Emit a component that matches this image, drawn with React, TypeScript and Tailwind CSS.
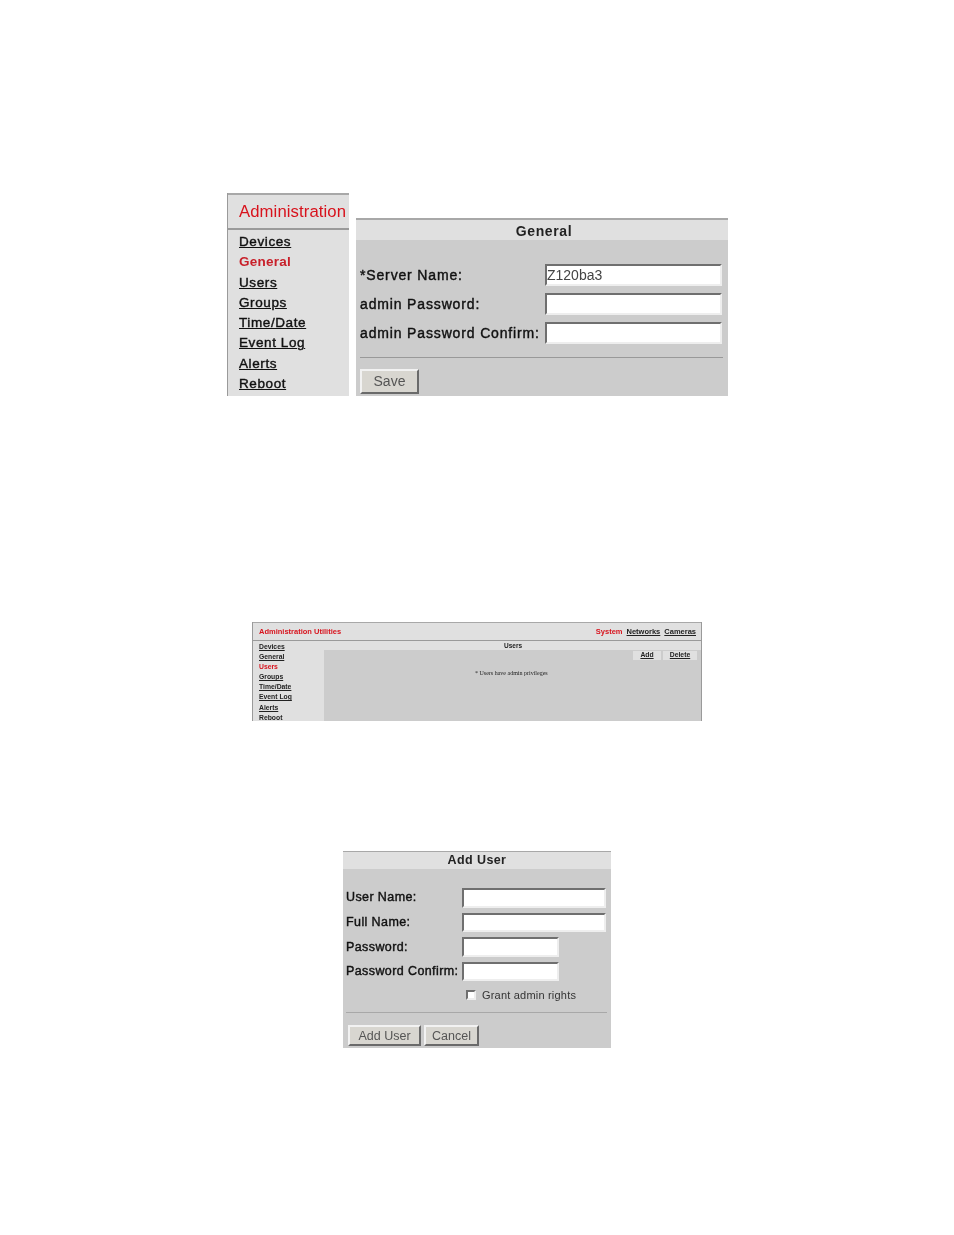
const NAV_ITEMS = [
  "Devices",
  "General",
  "Users",
  "Groups",
  "Time/Date",
  "Event Log",
  "Alerts",
  "Reboot",
];

const BEVEL_INPUT =
  "block h-full w-full border-2 border-t-[#6f6f6f] border-l-[#6f6f6f] border-r-[#eeeeee] border-b-[#eeeeee] bg-white";
const BEVEL_BUTTON =
  "flex items-center justify-center border-2 border-t-[#f2f2f2] border-l-[#f2f2f2] border-r-[#6a6a6a] border-b-[#6a6a6a] bg-[#d8d6d0] text-[#555555]";

function FieldInput({
  className,
  value,
}: {
  className: string;
  value?: string;
}) {
  return (
    <div className={className}>
      <div className={`${BEVEL_INPUT} flex items-center text-[14px] leading-none text-[#444444]`}>
        {value}
      </div>
    </div>
  );
}

function AdminNav() {
  return (
    <div className="flex h-[203px] w-[122px] flex-col border-l border-l-[#9a9a9a] bg-[#e0e0e0]">
      <div className="flex h-[37px] shrink-0 items-center border-y-2 border-t-[#a8a8a8] border-b-[#9a9a9a] pl-[11px] text-[16.7px] tracking-[0.1px] whitespace-nowrap text-[#d8121c]">
        Administration
      </div>
      <div className="flex flex-col pt-[2px] pl-[11px]">
        {NAV_ITEMS.map((item) => (
          <span
            key={item}
            className={`h-[20.3px] text-[13.5px] leading-[20px] ${
              item === "General"
                ? "font-bold tracking-[0.25px] text-[#c8202a]"
                : "tracking-[0.6px] text-[#111111] underline [-webkit-text-stroke:0.4px_currentColor]"
            }`}
          >
            {item}
          </span>
        ))}
      </div>
    </div>
  );
}

function GeneralPanel() {
  const rows = [
    { label: "*Server Name:", value: "Z120ba3" },
    { label: "admin Password:" },
    { label: "admin Password Confirm:" },
  ];
  return (
    <div className="mt-[25px] ml-[7px] flex h-[178px] w-[372px] flex-col bg-[#cccccc]">
      <div className="flex h-[22px] shrink-0 items-center justify-center border-t-2 border-t-[#a8a8a8] bg-[#e0e0e0] pt-[2px] text-[14px] font-bold tracking-[0.6px] text-[#222222]">
        <span className="ml-[4px]">General</span>
      </div>
      <div className="flex flex-col gap-[7px] pt-[24px] pl-[4px]">
        {rows.map((row) => (
          <div key={row.label} className="flex h-[22px] items-center">
            <span className="w-[185px] text-[14px] tracking-[0.85px] whitespace-nowrap text-[#111111] [-webkit-text-stroke:0.4px_currentColor]">
              {row.label}
            </span>
            <FieldInput className="h-[22px] w-[177px]" value={row.value} />
          </div>
        ))}
      </div>
      <div className="mt-[13px] ml-[4px] h-[1px] w-[363px] bg-[#999999]" />
      <div className={`${BEVEL_BUTTON} mt-[11px] ml-[4px] h-[25px] w-[59px] text-[14px]`}>
        Save
      </div>
    </div>
  );
}

function UtilitiesShot() {
  return (
    <div className="mt-[226px] ml-[252px] flex h-[99px] w-[450px] flex-col border-x border-x-[#9a9a9a] bg-[#cccccc] blur-[0.4px]">
      <div className="flex h-[19px] shrink-0 items-center justify-between border-y border-t-[#a8a8a8] border-b-[#9a9a9a] bg-[#e0e0e0] pr-[5px] pl-[6px] text-[7.5px] whitespace-nowrap">
        <span className="font-bold text-[#d8121c]">Administration Utilities</span>
        <div className="flex gap-[4px] font-bold">
          <span className="text-[#d8121c]">System</span>
          <span className="text-[#222222] underline">Networks</span>
          <span className="text-[#222222] underline">Cameras</span>
        </div>
      </div>
      <div className="flex min-h-0 flex-1">
        <div className="flex w-[71px] shrink-0 flex-col overflow-hidden bg-[#e0e0e0] pt-[1px] pl-[6px]">
          {NAV_ITEMS.map((item) => (
            <span
              key={item}
              className={`h-[10.1px] shrink-0 text-[6.8px] leading-[10px] font-bold ${
                item === "Users" ? "text-[#d8121c]" : "text-[#222222] underline"
              }`}
            >
              {item}
            </span>
          ))}
        </div>
        <div className="flex flex-1 flex-col">
          <div className="flex h-[9px] shrink-0 items-center justify-center bg-[#e0e0e0] text-[6.5px] font-bold text-[#222222]">
            <span className="ml-[1px]">Users</span>
          </div>
          <div className="mt-[1px] mr-[4px] flex justify-end gap-[2px]">
            <span className="flex h-[9px] w-[28px] items-center justify-center bg-[#e0e0e0] text-[6.8px] leading-none font-bold text-[#222222] underline">
              Add
            </span>
            <span className="flex h-[9px] w-[34px] items-center justify-center bg-[#e0e0e0] text-[6.8px] leading-none font-bold text-[#222222] underline">
              Delete
            </span>
          </div>
          <span className="mt-[9px] ml-[151px] font-['Liberation_Serif',serif] text-[6px] leading-[8px] whitespace-nowrap text-[#222222]">
            * Users have admin privileges
          </span>
        </div>
      </div>
    </div>
  );
}

function AddUserForm() {
  const rows = [
    { label: "User Name:", width: "w-[144px]" },
    { label: "Full Name:", width: "w-[144px]" },
    { label: "Password:", width: "w-[97px]" },
    { label: "Password Confirm:", width: "w-[97px]" },
  ];
  return (
    <div className="mt-[130px] ml-[343px] flex h-[197px] w-[268px] flex-col bg-[#cccccc]">
      <div className="flex h-[18px] shrink-0 items-center justify-center border-t border-t-[#a8a8a8] bg-[#e0e0e0] text-[12.5px] font-bold tracking-[0.4px] text-[#222222]">
        Add User
      </div>
      <div className="flex flex-col gap-[5px] pt-[19px] pl-[3px]">
        {rows.map((row) => (
          <div key={row.label} className="flex h-[19.6px] items-center">
            <span className="w-[116px] text-[12.5px] tracking-[0.4px] whitespace-nowrap text-[#111111] [-webkit-text-stroke:0.4px_currentColor]">
              {row.label}
            </span>
            <FieldInput className={`h-[19.6px] ${row.width}`} />
          </div>
        ))}
      </div>
      <div className="mt-[8px] ml-[123px] flex items-center">
        <div className="h-[10px] w-[10px] border-2 border-t-[#6f6f6f] border-l-[#6f6f6f] border-r-[#eeeeee] border-b-[#eeeeee] bg-white" />
        <span className="ml-[6px] text-[11px] leading-[12px] tracking-[0.2px] text-[#333333]">
          Grant admin rights
        </span>
      </div>
      <div className="mt-[11px] ml-[3px] h-[1px] w-[261px] bg-[#a8a8a8]" />
      <div className="mt-[12px] ml-[5px] flex gap-[3px]">
        <div className={`${BEVEL_BUTTON} h-[21px] w-[73px] text-[12.5px]`}>Add User</div>
        <div className={`${BEVEL_BUTTON} h-[21px] w-[55px] text-[12.5px]`}>Cancel</div>
      </div>
    </div>
  );
}

export default function App() {
  return (
    <div className="h-[1235px] w-[954px] overflow-hidden bg-white pt-[193px] font-['Liberation_Sans',Arial,sans-serif] blur-[0.25px]">
      <div className="ml-[227px] flex items-start">
        <AdminNav />
        <GeneralPanel />
      </div>
      <UtilitiesShot />
      <AddUserForm />
    </div>
  );
}
